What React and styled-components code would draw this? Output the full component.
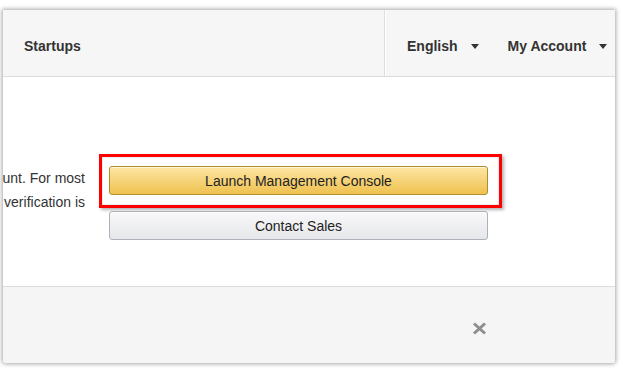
import React from "react";
import styled, { createGlobalStyle } from "styled-components";

const GlobalStyle = createGlobalStyle`
  html, body {
    margin: 0;
    padding: 0;
    background: #fff;
    font-family: "Liberation Sans", Arial, sans-serif;
    color: #333;
  }
`;

const Page = styled.div`
  padding: 10px 8px 5px 3px;
  width: 623px;
  height: 368px;
  box-sizing: border-box;
`;

const Window = styled.div`
  width: 612px;
  height: 353px;
  display: flex;
  flex-direction: column;
  background: #fff;
  overflow: hidden;
  border-radius: 0 0 3px 3px;
  box-shadow: 0 0 4px 1px rgba(0, 0, 0, 0.35);
`;

const Header = styled.header`
  height: 67px;
  box-sizing: border-box;
  padding-top: 6px;
  display: flex;
  background: #f6f6f6;
  border-bottom: 1px solid #dcdcdc;
  font-size: 14px;
  font-weight: 700;
  color: #333;
`;

const Brand = styled.div`
  flex: 1;
  display: flex;
  align-items: center;
  padding-left: 21px;
`;

const NavRight = styled.nav`
  width: 231px;
  box-sizing: border-box;
  margin-top: -6px;
  padding: 6px 0 0 22px;
  display: flex;
  align-items: center;
  gap: 29px;
  border-left: 1px solid #dedede;
  box-shadow: inset 1px 0 0 #fff;
`;

const Menu = styled.span`
  display: flex;
  align-items: center;
  gap: 13px;
`;

const Caret = styled.i`
  width: 0;
  height: 0;
  border-left: 4px solid transparent;
  border-right: 4px solid transparent;
  border-top: 5px solid #333;
`;

const Body = styled.main`
  height: 209px;
  flex-shrink: 0;
  box-sizing: border-box;
  padding-top: 77px;
  display: flex;
  gap: 14px;
`;

const Blurb = styled.div`
  width: 82px;
  flex-shrink: 0;
  margin-top: 12px;
  display: flex;
  flex-direction: column;
  align-items: flex-end;
  font-size: 14px;
  line-height: 24px;
  color: #333;
  span {
    white-space: nowrap;
  }
`;

const Actions = styled.div`
  display: flex;
  flex-direction: column;
  gap: 3px;
`;

const Highlight = styled.div`
  width: 403px;
  height: 54px;
  box-sizing: border-box;
  border: 3px solid #f00;
  padding: 9px 0 0 7px;
  box-shadow: 2px 2px 3px rgba(0, 0, 0, 0.3), inset 0 0 2px rgba(0, 0, 0, 0.25);
`;

const Button = styled.button`
  width: 379px;
  height: 29px;
  margin-left: ${(p) => (p.$indent ? "10px" : "0")};
  border-radius: 3px;
  font-family: "Liberation Sans", Arial, sans-serif;
  font-size: 14px;
  color: #222;
  cursor: pointer;
  border: 1px solid ${(p) => (p.$primary ? "#b28d2c" : "#adb1b8")};
  background: ${(p) =>
    p.$primary
      ? "linear-gradient(to bottom, #fde6a4, #efc14f)"
      : "linear-gradient(to bottom, #f8f8fa, #e6e7ea)"};
  box-shadow: inset 0 1px 0 rgba(255, 255, 255, 0.6);
`;

const Footer = styled.footer`
  flex: 1;
  display: flex;
  align-items: center;
  justify-content: flex-end;
  padding-right: 128px;
  background: #f5f5f5;
  border-top: 1px solid #dcdcdc;
`;

const Close = styled.button`
  border: none;
  background: none;
  padding: 0;
  margin-top: 6px;
  cursor: pointer;
  display: flex;
`;

export default function App() {
  return (
    <Page>
      <GlobalStyle />
      <Window>
        <Header>
          <Brand>Startups</Brand>
          <NavRight>
            <Menu>
              English <Caret />
            </Menu>
            <Menu>
              My Account <Caret />
            </Menu>
          </NavRight>
        </Header>
        <Body>
          <Blurb>
            <span>unt. For most</span>
            <span>verification is</span>
          </Blurb>
          <Actions>
            <Highlight>
              <Button $primary>Launch Management Console</Button>
            </Highlight>
            <Button $indent>Contact Sales</Button>
          </Actions>
        </Body>
        <Footer>
          <Close aria-label="Close">
            <svg width="15" height="13" viewBox="0 0 15 13">
              <path
                d="M2 1.5 L13 11.5 M13 1.5 L2 11.5"
                stroke="#8e8e8e"
                strokeWidth="3"
              />
            </svg>
          </Close>
        </Footer>
      </Window>
    </Page>
  );
}
